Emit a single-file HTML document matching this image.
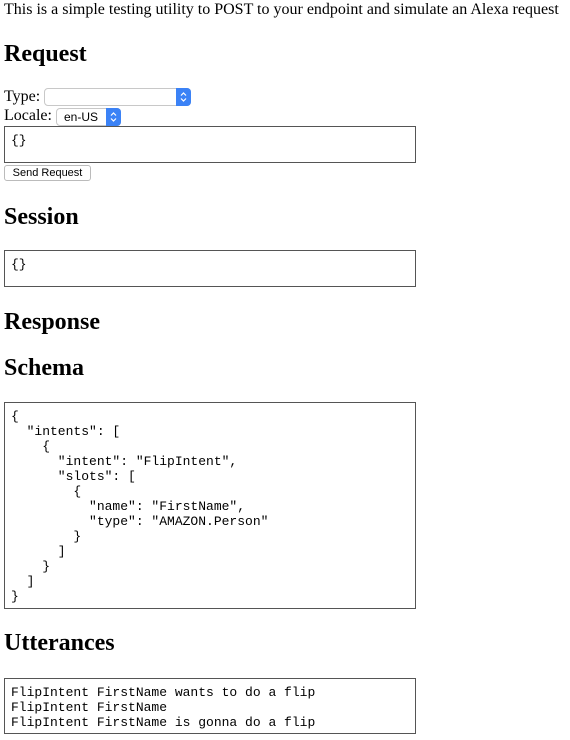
<!DOCTYPE html>
<html><head><meta charset="utf-8"><style>
body{margin:0;width:570px;height:740px;position:relative;background:#fff;font-family:"Liberation Serif",serif;color:#000;overflow:hidden}
.a{position:absolute;white-space:pre}
.h{font-size:24px;font-weight:bold;line-height:28px}
.t{font-size:16px;line-height:18px}
.box{position:absolute;left:4px;border:1px solid #555}
.mono{font-family:"Liberation Mono",monospace;font-size:13px;line-height:15px;white-space:pre;padding:6px 0 0 6px;box-sizing:border-box;width:412px}
.sel{position:absolute;border:1px solid #c8c8c8;border-radius:4px;background:#fff;box-sizing:border-box}
.arr{position:absolute;right:-1px;top:-1px;bottom:-1px;width:15px;background:#3b82f6;border-radius:0 4px 4px 0}
</style></head><body>
<div class="a t" style="left:4px;top:1px">This is a simple testing utility to POST to your endpoint and simulate an Alexa request</div>
<div class="a h" style="left:4px;top:40px">Request</div>
<div class="a t" style="left:4px;top:88px">Type:</div>
<div class="sel" style="left:44px;top:88px;width:147px;height:18px"><div class="arr"><svg width="15" height="18" viewBox="0 0 15 18"><path d="M5 7.5L7.5 5L10 7.5M5 10.5L7.5 13L10 10.5" fill="none" stroke="#fff" stroke-width="1.2"/></svg></div></div>
<div class="a t" style="left:4px;top:107px">Locale:</div>
<div class="sel" style="left:56px;top:108px;width:65px;height:18px;font:12px 'Liberation Sans',sans-serif;line-height:16px;padding-left:7px">en-US<div class="arr"><svg width="15" height="18" viewBox="0 0 15 18"><path d="M5 7.5L7.5 5L10 7.5M5 10.5L7.5 13L10 10.5" fill="none" stroke="#fff" stroke-width="1.2"/></svg></div></div>
<div class="box mono" style="top:126px;height:37px;">{}</div>
<div class="a" style="left:4px;top:165px;width:87px;height:16px;border:1px solid #bbb;border-radius:3px;box-sizing:border-box;font:11px 'Liberation Sans',sans-serif;line-height:14px;text-align:center">Send Request</div>
<div class="a h" style="left:4px;top:203px">Session</div>
<div class="box mono" style="top:250px;height:37px;">{}</div>
<div class="a h" style="left:4px;top:308px">Response</div>
<div class="a h" style="left:4px;top:354px">Schema</div>
<div class="box mono" style="top:402px;height:207px;">{
  "intents": [
    {
      "intent": "FlipIntent",
      "slots": [
        {
          "name": "FirstName",
          "type": "AMAZON.Person"
        }
      ]
    }
  ]
}</div>
<div class="a h" style="left:4px;top:629px">Utterances</div>
<div class="box mono" style="top:678px;height:56px;">FlipIntent FirstName wants to do a flip
FlipIntent FirstName
FlipIntent FirstName is gonna do a flip</div>
</body></html>
